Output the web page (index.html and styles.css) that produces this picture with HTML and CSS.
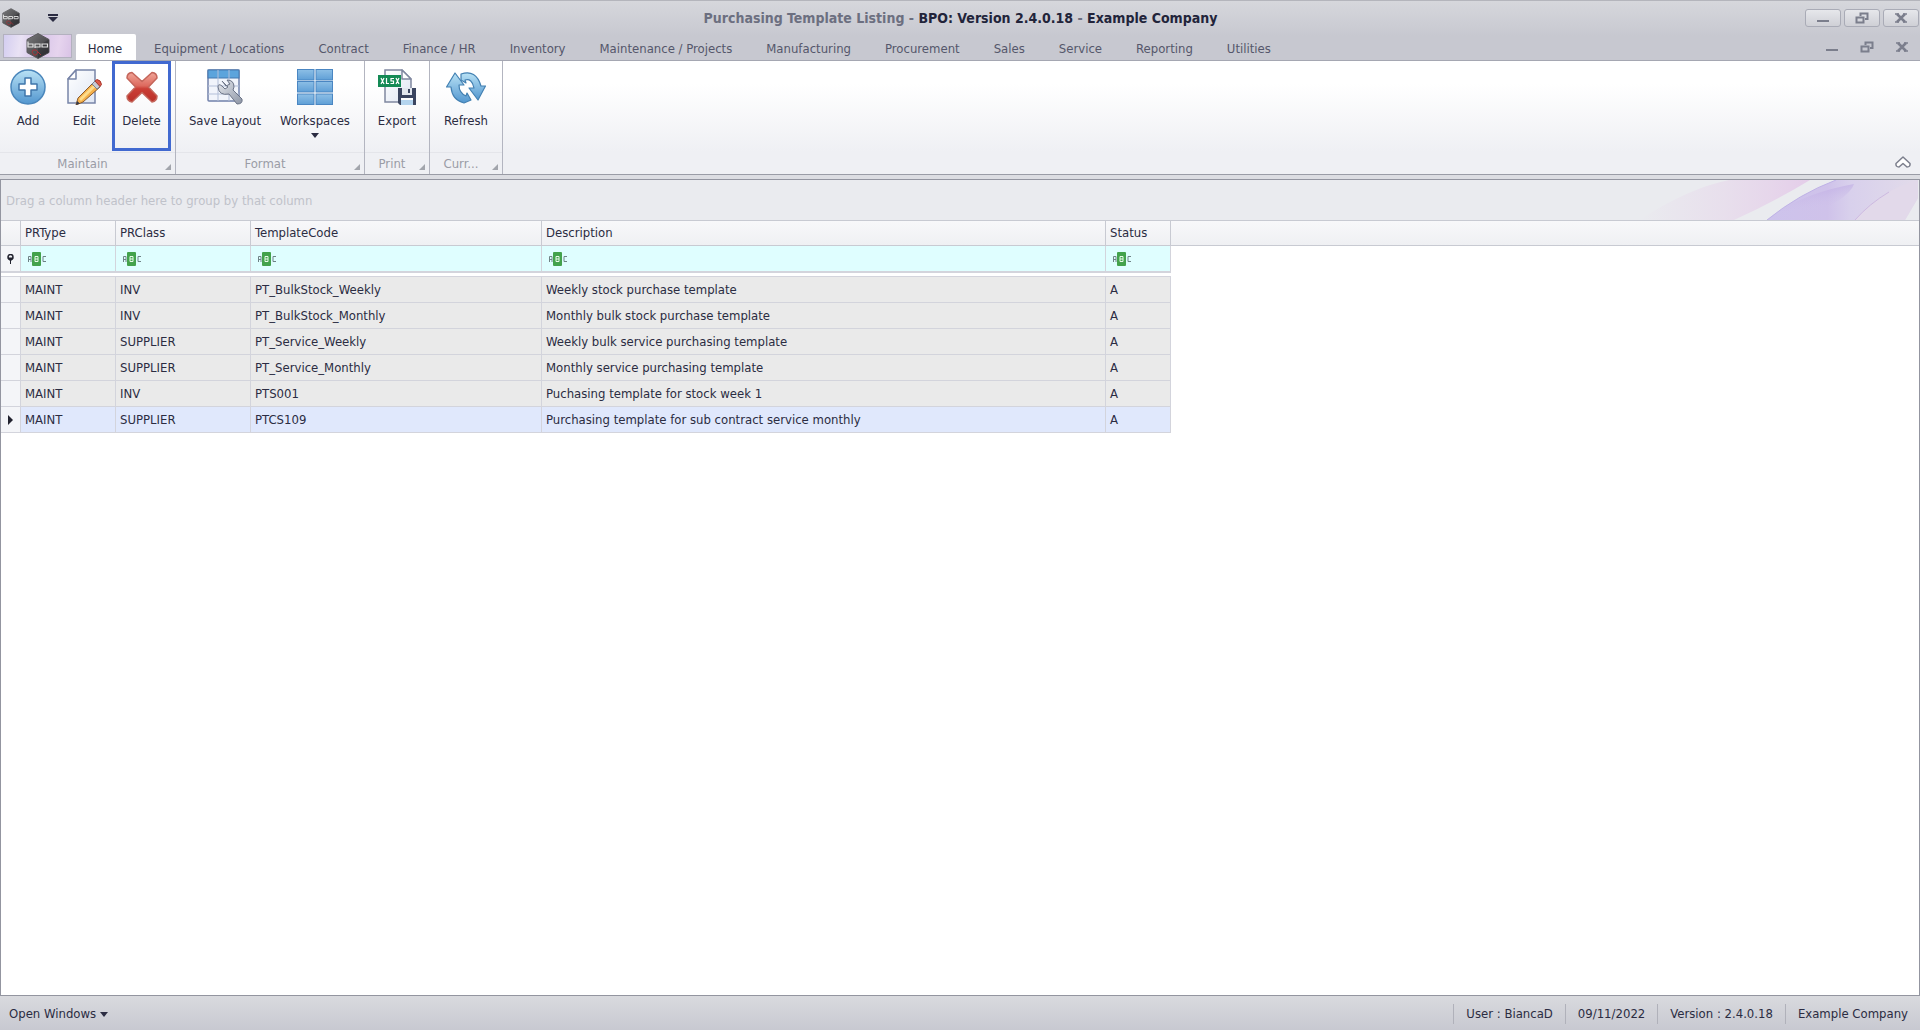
FILE: index.html
```html
<!DOCTYPE html>
<html lang="en">
<head>
    <meta charset="UTF-8">
    <meta name="viewport" content="width=device-width, initial-scale=1.0">
    <title>Purchasing Template Listing - BPO: Version 2.4.0.18 - Example Company</title>
    <link rel="stylesheet" href="styles.css">
</head>
<body>
    <!-- Shared shapes -->
    <svg class="defs" width="0" height="0" aria-hidden="true">
        <defs>
            <linearGradient id="blue" x1="0" y1="0" x2="0" y2="1">
                <stop offset="0" stop-color="#b9e2f5"/>
                <stop offset="1" stop-color="#5296cf"/>
            </linearGradient>
            <linearGradient id="tile" x1="0" y1="0" x2="0" y2="1">
                <stop offset="0" stop-color="#8dbfe6"/>
                <stop offset="1" stop-color="#5f9fd6"/>
            </linearGradient>
            <linearGradient id="red" x1="0" y1="0" x2="0" y2="1">
                <stop offset="0" stop-color="#f0a598"/>
                <stop offset="0.45" stop-color="#dd6a5e"/>
                <stop offset="0.55" stop-color="#cb3f36"/>
                <stop offset="1" stop-color="#b92f28"/>
            </linearGradient>
            <linearGradient id="paper" x1="0" y1="0" x2="1" y2="1">
                <stop offset="0" stop-color="#ffffff"/>
                <stop offset="1" stop-color="#dfe6f3"/>
            </linearGradient>
            <linearGradient id="steel" x1="0" y1="0" x2="1" y2="1">
                <stop offset="0" stop-color="#e6e9ee"/>
                <stop offset="1" stop-color="#8d95a5"/>
            </linearGradient>
            <linearGradient id="hex" x1="0" y1="0" x2="1" y2="1">
                <stop offset="0" stop-color="#7b7b7d"/>
                <stop offset="1" stop-color="#2e2e31"/>
            </linearGradient>
        </defs>
        <symbol id="logo" viewBox="0 0 24 26">
            <path d="M12 0.5 23 6.5V19.5L12 25.5 1 19.5V6.5Z" fill="url(#hex)" stroke="#5a5a5c"/>
            <path d="M12 13 23 6.5V19.5L12 25.5Z" fill="#26262a" opacity="0.4"/>
            <path d="M2 8.500V14H7V11H2M9 15V11H14V14H9M16 11H21.500V14H16Z" fill="none" stroke="#e4e4e4" stroke-width="1.200"/>
            <path d="M7 17h3l2 2-2 3H8l-2-3zM12 19l3 3" fill="none" stroke="#a5343a"/>
        </symbol>
        <symbol id="restore" viewBox="0 0 14 12">
            <path d="M5.500 4V1.500H12.500V7H10" fill="none" stroke="#7b7e8c" stroke-width="2"/>
            <path d="M1.500 5.500H8.500V10.500H1.500Z" fill="none" stroke="#7b7e8c" stroke-width="2"/>
        </symbol>
        <symbol id="minimize" viewBox="0 0 14 12">
            <path d="M1 9H13" stroke="#7b7e8c" stroke-width="2"/>
        </symbol>
        <symbol id="close" viewBox="0 0 14 12">
            <path d="M3 2 11 10M11 2 3 10" stroke="#7b7e8c" stroke-width="2.500"/>
            <path d="M1 2H5M9 2H13M1 10H5M9 10H13" stroke="#7b7e8c" stroke-width="1.500"/>
        </symbol>
        <symbol id="abc" viewBox="0 0 20 14">
            <path d="M1.500 10V4.500H4V10M1.500 7.500H4" fill="none" stroke="#6f8286"/>
            <rect x="5" y="0" width="9" height="14" rx="1" fill="#43a24c"/>
            <path d="M8 4.500H11V9.500H8ZM8 7H11" fill="none" stroke="#e9fbea"/>
            <path d="M19 4.500H16V9.500H19" fill="none" stroke="#6f8286"/>
        </symbol>
        <symbol id="corner" viewBox="0 0 6 6">
            <path d="M6 0V6H0Z" fill="#a2a5ac"/>
        </symbol>
        <symbol id="down" viewBox="0 0 8 5">
            <path d="M0 0H8L4 5Z" fill="#2b2c42"/>
        </symbol>
    </svg>

    <div class="window">
        <header class="frame">
            <div class="title-bar">
                <div class="quick-access">
                    <svg class="app-icon"><use href="#logo"/></svg>
                    <button class="customize" aria-label="Customize Quick Access Toolbar">
                        <svg width="10" height="8" viewBox="0 0 10 8"><path d="M0 1H10" stroke="#2b2c42" stroke-width="2"/><path d="M0 3H10L5 8Z" fill="#2b2c42"/></svg>
                    </button>
                </div>
                <h1><span class="dim">Purchasing Template Listing - </span>BPO: Version 2.4.0.18 <span class="dim">-</span> Example Company</h1>
                <div class="window-buttons">
                    <button aria-label="Minimize"><svg class="glyph"><use href="#minimize"/></svg></button>
                    <button aria-label="Restore"><svg class="glyph"><use href="#restore"/></svg></button>
                    <button aria-label="Close"><svg class="glyph"><use href="#close"/></svg></button>
                </div>
            </div>
            <div class="tab-bar">
                <button class="app-button" aria-label="Application menu"><svg class="app-logo"><use href="#logo"/></svg></button>
                <nav class="tabs">
                    <button class="tab active">Home</button>
                    <button class="tab">Equipment / Locations</button>
                    <button class="tab">Contract</button>
                    <button class="tab">Finance / HR</button>
                    <button class="tab">Inventory</button>
                    <button class="tab">Maintenance / Projects</button>
                    <button class="tab">Manufacturing</button>
                    <button class="tab">Procurement</button>
                    <button class="tab">Sales</button>
                    <button class="tab">Service</button>
                    <button class="tab">Reporting</button>
                    <button class="tab">Utilities</button>
                </nav>
                <div class="child-buttons">
                    <button aria-label="Minimize child"><svg class="glyph"><use href="#minimize"/></svg></button>
                    <button aria-label="Restore child"><svg class="glyph"><use href="#restore"/></svg></button>
                    <button aria-label="Close child"><svg class="glyph"><use href="#close"/></svg></button>
                </div>
            </div>
        </header>

        <section class="ribbon">
            <div class="group">
                <div class="items">
                    <button class="item">
                        <svg class="icon" viewBox="0 0 36 36">
                            <circle cx="18" cy="18" r="17" fill="url(#blue)" stroke="#4a86bb" stroke-width="1.500"/>
                            <path d="M15 9H21V15H27V21H21V27H15V21H9V15H15Z" fill="#fff" stroke="#3f76ab" stroke-width="1.500" stroke-linejoin="round"/>
                        </svg>
                        <span>Add</span>
                    </button>
                    <button class="item">
                        <svg class="icon" viewBox="0 0 36 36">
                            <path d="M10 1H29V34H2V10Z" fill="url(#paper)" stroke="#7885a8" stroke-width="1.500"/>
                            <path d="M2 10H10V1Z" fill="#fff" stroke="#7885a8" stroke-width="1.500" stroke-linejoin="round"/>
                            <path d="M10 36 12 29 28 13 34 18 17 33Z" fill="#f5b04a" stroke="#8a5a2c"/>
                            <path d="M13 30 29 14.500 31 16.500 15 32Z" fill="#fddc8c"/>
                            <path d="M26 15 29 12 34.500 17 31 20Z" fill="#c6cbd5" stroke="#7b8090"/>
                            <path d="M29 12 31 10.500Q35 11 35.500 15.500L34 17.500Z" fill="#dd5a4a" stroke="#a8392e"/>
                            <path d="M10 36 11 32 14 34.500Z" fill="#333a4d"/>
                        </svg>
                        <span>Edit</span>
                    </button>
                    <button class="item selected">
                        <svg class="icon" viewBox="0 0 36 36">
                            <path d="M8 3.500 18 12.500 28 3.500Q33 4 33 9L24.500 18 33 27Q33 32 28 33L18 23.500 8 33Q3 32 3 27L11.500 18 3 9Q3 4 8 3.500Z" fill="url(#red)" stroke="#c4655a" stroke-width="1.500" stroke-linejoin="round"/>
                        </svg>
                        <span>Delete</span>
                    </button>
                </div>
                <div class="caption"><span>Maintain</span><svg class="corner"><use href="#corner"/></svg></div>
            </div>
            <div class="group">
                <div class="items">
                    <button class="item large">
                        <svg class="icon" viewBox="0 0 36 36">
                            <rect x="1" y="1" width="31" height="31" rx="1" fill="#f1f4fb" stroke="#7281ab" stroke-width="1.500"/>
                            <rect x="1" y="1" width="31" height="8" fill="#5ca4dc" stroke="#4478b0"/>
                            <path d="M11 1V32M22 1V32M1 17H32M1 25H32" stroke="#b3bfd8"/>
                            <path d="M15 12 19 17 23 15 20 11Q27 11 27 18L26 21 35 30Q36 35 30 35L22 25Q12 27 11 18Q11 14 15 17L18 20 21 18Z" fill="url(#steel)" stroke="#6b7386" stroke-linejoin="round"/>
                        </svg>
                        <span>Save Layout</span>
                    </button>
                    <button class="item large">
                        <svg class="icon" viewBox="0 0 36 36">
                            <g fill="url(#tile)" stroke="#4a86c2">
                                <rect x="0.500" y="0.500" width="16.500" height="10.500"/>
                                <rect x="19" y="0.500" width="16.500" height="10.500"/>
                                <rect x="0.500" y="12.500" width="16.500" height="10.500"/>
                                <rect x="19" y="12.500" width="16.500" height="10.500"/>
                                <rect x="0.500" y="25" width="16.500" height="10.500"/>
                                <rect x="19" y="25" width="16.500" height="10.500"/>
                            </g>
                        </svg>
                        <span>Workspaces</span>
                        <svg class="arrow"><use href="#down"/></svg>
                    </button>
                </div>
                <div class="caption"><span>Format</span><svg class="corner"><use href="#corner"/></svg></div>
            </div>
            <div class="group">
                <div class="items">
                    <button class="item">
                        <svg class="icon wide" viewBox="0 0 38 36">
                            <path d="M7 1H24L33 10V33H7Z" fill="url(#paper)" stroke="#8088a0" stroke-width="1.500"/>
                            <path d="M24 1V10H33Z" fill="#fff" stroke="#8088a0" stroke-width="1.500" stroke-linejoin="round"/>
                            <rect x="0" y="6" width="23" height="12" fill="#148a55"/>
                            <path d="M3 9 6 15M6 9 3 15M8.500 9V14.500H11M16 9.500H13V12H15.500V14.500H12.500M18 9 21 15M21 9 18 15" fill="none" stroke="#fff" stroke-width="1.200"/>
                            <path d="M20 19H38V36H22L20 34Z" fill="#3b4560"/>
                            <rect x="24" y="19" width="10" height="7" fill="#e3e7ee"/>
                            <rect x="30" y="20" width="2" height="4" fill="#3b4560"/>
                            <rect x="23" y="29" width="12" height="7" fill="#b4d4ee"/>
                            <path d="M23 30H35" stroke="#fff" stroke-width="2"/>
                        </svg>
                        <span>Export</span>
                    </button>
                </div>
                <div class="caption"><span>Print</span><svg class="corner"><use href="#corner"/></svg></div>
            </div>
            <div class="group">
                <div class="items">
                    <button class="item medium">
                        <svg class="icon xwide" viewBox="0 0 40 36">
                            <g fill="url(#blue)" stroke="#4380b2" stroke-width="1.200" stroke-linejoin="round">
                                <path d="M9 4 18 16H13Q13 24 20 27L21 24 25 31 18 34Q6 31 5 18H0.500Z"/>
                                <path d="M15 5Q30 0 35 17H39.500L32 31 23 19H28Q26 9 19 11L20 14 15 11Z"/>
                            </g>
                        </svg>
                        <span>Refresh</span>
                    </button>
                </div>
                <div class="caption"><span>Curr...</span><svg class="corner"><use href="#corner"/></svg></div>
            </div>
            <button class="collapse" aria-label="Collapse the Ribbon">
                <svg width="16" height="12" viewBox="0 0 16 12"><path d="M8 1 15 7.500Q15.500 11 12 11L8 7.500 4 11Q0.500 11 1 7.500Z" fill="#fff" stroke="#7b7e8c" stroke-width="1.500" stroke-linejoin="round"/></svg>
            </button>
        </section>

        <main class="listing">
            <div class="group-panel">
                <span>Drag a column header here to group by that column</span>
                <svg class="swirl" viewBox="0 0 320 40" preserveAspectRatio="none">
                    <defs>
                        <linearGradient id="pink" x1="0" y1="0" x2="1" y2="0">
                            <stop offset="0" stop-color="#e6d3ea" stop-opacity="0"/>
                            <stop offset="0.500" stop-color="#e6d3ea" stop-opacity="0.500"/>
                            <stop offset="1" stop-color="#e4cde9"/>
                        </linearGradient>
                        <linearGradient id="violet" x1="0" y1="0" x2="1" y2="0">
                            <stop offset="0" stop-color="#cdc3ec"/>
                            <stop offset="0.400" stop-color="#cfc2ea"/>
                            <stop offset="0.550" stop-color="#d8d0ec"/>
                            <stop offset="1" stop-color="#e2dbea"/>
                        </linearGradient>
                        <linearGradient id="fold" x1="0" y1="0" x2="0.300" y2="1">
                            <stop offset="0.200" stop-color="#bda9e4" stop-opacity="0.700"/>
                            <stop offset="0.800" stop-color="#cfc2ea" stop-opacity="0"/>
                        </linearGradient>
                    </defs>
                    <path d="M40 40Q90 8 130 0H211Q175 22 135 40Z" fill="url(#pink)"/>
                    <path d="M168 40Q200 14 237 0H319V18L306 40Z" fill="url(#violet)"/>
                    <path d="M168 40Q200 14 255 4Q250 20 200 40Z" fill="url(#fold)"/>
                    <path d="M168 40Q200 14 237 0" fill="none" stroke="#bfb2e6"/>
                    <path d="M256 40Q282 10 319 0V18L306 40Z" fill="#e2d9ea"/>
                    <path d="M256 40Q270 24 290 12" fill="none" stroke="#cdb9e1"/>
                </svg>
            </div>
            <table class="grid">
                <colgroup>
                    <col class="col-mark">
                    <col class="col-type">
                    <col class="col-class">
                    <col class="col-code">
                    <col class="col-desc">
                    <col class="col-status">
                    <col>
                </colgroup>
                <thead>
                    <tr class="head">
                        <th></th>
                        <th>PRType</th>
                        <th>PRClass</th>
                        <th>TemplateCode</th>
                        <th>Description</th>
                        <th>Status</th>
                        <th></th>
                    </tr>
                    <tr class="filter">
                        <td class="mark"><svg width="7" height="10" viewBox="0 0 7 10"><circle cx="3.500" cy="3" r="2.500" fill="none" stroke="#22232f" stroke-width="1.500"/><path d="M1 4H6L3.500 7ZM3.500 5V10" fill="#22232f" stroke="#22232f"/></svg></td>
                        <td><div class="filter-box"><svg class="abc"><use href="#abc"/></svg><input type="text" aria-label="Filter PRType"></div></td>
                        <td><div class="filter-box"><svg class="abc"><use href="#abc"/></svg><input type="text" aria-label="Filter PRClass"></div></td>
                        <td><div class="filter-box"><svg class="abc"><use href="#abc"/></svg><input type="text" aria-label="Filter TemplateCode"></div></td>
                        <td><div class="filter-box"><svg class="abc"><use href="#abc"/></svg><input type="text" aria-label="Filter Description"></div></td>
                        <td><div class="filter-box"><svg class="abc"><use href="#abc"/></svg><input type="text" aria-label="Filter Status"></div></td>
                        <td class="blank"></td>
                    </tr>
                    <tr class="split"><td colspan="6"></td><td class="blank"></td></tr>
                </thead>
                <tbody>
                    <tr><td class="mark"></td><td>MAINT</td><td>INV</td><td>PT_BulkStock_Weekly</td><td>Weekly stock purchase template</td><td>A</td><td class="blank"></td></tr>
                    <tr><td class="mark"></td><td>MAINT</td><td>INV</td><td>PT_BulkStock_Monthly</td><td>Monthly bulk stock purchase template</td><td>A</td><td class="blank"></td></tr>
                    <tr><td class="mark"></td><td>MAINT</td><td>SUPPLIER</td><td>PT_Service_Weekly</td><td>Weekly bulk service purchasing template</td><td>A</td><td class="blank"></td></tr>
                    <tr><td class="mark"></td><td>MAINT</td><td>SUPPLIER</td><td>PT_Service_Monthly</td><td>Monthly service purchasing template</td><td>A</td><td class="blank"></td></tr>
                    <tr><td class="mark"></td><td>MAINT</td><td>INV</td><td>PTS001</td><td>Puchasing template for stock week 1</td><td>A</td><td class="blank"></td></tr>
                    <tr class="current"><td class="mark"><svg width="5" height="10" viewBox="0 0 5 10"><path d="M0 0 5 5 0 10Z" fill="#22232f"/></svg></td><td>MAINT</td><td>SUPPLIER</td><td>PTCS109</td><td>Purchasing template for sub contract service monthly</td><td>A</td><td class="blank"></td></tr>
                </tbody>
            </table>
        </main>

        <footer class="status-bar">
            <button class="open-windows">Open Windows <svg class="arrow"><use href="#down"/></svg></button>
            <div class="status-items">
                <span>User : BiancaD</span>
                <span>09/11/2022</span>
                <span>Version : 2.4.0.18</span>
                <span>Example Company</span>
            </div>
        </footer>
    </div>
</body>
</html>
```
FILE: styles.css
```css
* {
    box-sizing: border-box;
}

body {
    margin: 0;
    font-family: Tahoma, "DejaVu Sans Condensed", "DejaVu Sans", sans-serif;
    font-size: 13px;
    line-height: 16px;
    color: #2b2c42;
}

button {
    font: inherit;
    color: inherit;
    background: none;
    border: none;
    padding: 0;
}

svg {
    display: block;
    flex: none;
}

.defs {
    position: absolute;
}

.window {
    display: flex;
    flex-direction: column;
    min-height: 100vh;
    background: #fff;
}

/* Title bar and tabs */
.frame {
    background: linear-gradient(#d6d7dc, #c7c8d0 60%);
    border-top: 1px solid #b4b5bc;
    border-bottom: 1px solid #a5a7b2;
}

.title-bar {
    display: flex;
    align-items: center;
    height: 33px;
}

.quick-access {
    display: flex;
    align-items: center;
    flex: 1;
    gap: 28px;
    padding-left: 2px;
}

.app-icon {
    width: 18px;
    height: 20px;
}

h1 {
    margin: 0;
    font-size: 14px;
    line-height: 16px;
    font-weight: bold;
    color: #22243a;
}

.dim {
    color: #6c6f80;
}

.window-buttons {
    display: flex;
    flex: 1;
    justify-content: flex-end;
    gap: 3px;
    padding-right: 1px;
}

.window-buttons button {
    display: flex;
    align-items: center;
    justify-content: center;
    width: 36px;
    height: 18px;
    border: 1px solid #a9abb6;
    border-radius: 3px;
    background: linear-gradient(#e6e7eb, #cfd0d6);
}

.glyph {
    width: 14px;
    height: 12px;
}

.tab-bar {
    display: flex;
    height: 26px;
}

.app-button {
    display: flex;
    align-items: center;
    justify-content: center;
    width: 69px;
    height: 24px;
    margin: 0 3px;
    border: 1px solid #b3b1bf;
    background: linear-gradient(100deg, #d3cdf0, #e9e2f4 25%, #d6c4e8 50%, #e6d4ee 80%, #d9c3e6);
}

.app-logo {
    width: 24px;
    height: 26px;
}

.tabs {
    display: flex;
    flex: 1;
}

.tab {
    padding: 4px 17px 0;
    color: #55576b;
    white-space: nowrap;
}

.tab.active {
    width: 60px;
    padding: 4px 2px 0 0;
    margin: 0 1px;
    border-radius: 2px 2px 0 0;
    background: #fff;
    color: #2b2c42;
}

.child-buttons {
    display: flex;
    align-items: center;
    gap: 21px;
    padding-right: 11px;
}

/* Ribbon */
.ribbon {
    display: flex;
    height: 114px;
    background: linear-gradient(#fff 20%, #eff0f4 80%);
    border-bottom: 1px solid #9a9ca6;
}

.group {
    display: flex;
    flex-direction: column;
    border-right: 1px solid #b3b5c0;
}

.items {
    display: flex;
    flex: 1;
    padding: 0 4px;
}

.group:first-child .items {
    padding-left: 0;
}

.item {
    display: flex;
    flex-direction: column;
    align-items: center;
    width: 56px;
    height: 90px;
    padding-top: 8px;
    border: 0 solid #4169d0;
    white-space: nowrap;
}

.item.medium {
    width: 64px;
}

.item.large {
    width: 90px;
}

.item span {
    margin-top: 8px;
}

.item.selected {
    width: 59px;
    border-width: 3px;
    padding-top: 5px;
}

.icon {
    width: 36px;
    height: 36px;
}

.icon.wide {
    width: 38px;
}

.icon.xwide {
    width: 40px;
}

.arrow {
    width: 8px;
    height: 5px;
}

.item .arrow {
    margin-top: 4px;
}

.caption {
    display: flex;
    align-items: center;
    height: 22px;
    padding-right: 4px;
    border-top: 1px solid #e4e5ea;
    color: #9a9ca6;
}

.caption span {
    flex: 1;
    text-align: center;
}

.corner {
    width: 6px;
    height: 6px;
    margin-top: 6px;
}

.collapse {
    align-self: flex-end;
    margin: 0 9px 6px auto;
}

/* Grid */
.listing {
    flex: 1;
    margin-top: 4px;
    border: 1px solid #9395a0;
    outline: 4px solid #dcdde2;
}

.group-panel {
    display: flex;
    align-items: center;
    justify-content: space-between;
    height: 40px;
    padding-left: 5px;
    background: #eaebef;
    color: #c0c2ca;
}

.group-panel span {
    padding-top: 2px;
}

.swirl {
    width: 320px;
    height: 40px;
}

.grid {
    width: 100%;
    table-layout: fixed;
    border-collapse: separate;
    border-spacing: 0;
}

.col-mark {
    width: 20px;
}

.col-type {
    width: 95px;
}

.col-class {
    width: 135px;
}

.col-code {
    width: 291px;
}

.col-desc {
    width: 564px;
}

.col-status {
    width: 65px;
}

.grid th,
.grid td {
    height: 26px;
    padding: 0 4px;
    border-right: 1px solid #d3d4dc;
    border-bottom: 1px solid #d3d4dc;
    text-align: left;
    white-space: nowrap;
}

.grid th {
    border-top: 1px solid #c8cad2;
    border-color: #c8cad2;
    font-weight: normal;
    background: linear-gradient(#f8f8fa, #eff0f3);
}

.grid th:last-child {
    border-right: none;
}

.grid tbody td {
    background: #eaeaea;
}

.grid .current td {
    background: #e0e8fc;
}

.grid .filter td {
    background: #dffeff;
}

.grid tbody td.mark,
.grid .filter td.mark {
    padding: 0;
    background: #f4f5f8;
}

.mark svg {
    margin: 0 auto;
}

.grid .split td {
    height: 5px;
    padding: 0;
    border-right: none;
    border-top: 1px solid #d3d4dc;
    background: #fff;
}

.grid tbody td.blank,
.grid .filter td.blank,
.grid .split td.blank {
    border: none;
    background: #fff;
}

.filter-box {
    display: flex;
    align-items: center;
    padding: 1px 0 0 2px;
}

.filter-box input {
    flex: 1;
    min-width: 0;
    height: 20px;
    padding: 0 4px;
    border: none;
    background: none;
    font: inherit;
}

.abc {
    width: 20px;
    height: 14px;
}

/* Status bar */
.status-bar {
    display: flex;
    justify-content: space-between;
    align-items: center;
    position: relative;
    height: 34px;
    padding: 2px 0 0 9px;
    background: linear-gradient(#d9dade, #c8c9d1);
}

.open-windows {
    display: flex;
    align-items: center;
    gap: 4px;
}

.status-items {
    display: flex;
}

.status-items span {
    padding: 2px 12px;
    border-left: 1px solid #b0b1ba;
}
```
